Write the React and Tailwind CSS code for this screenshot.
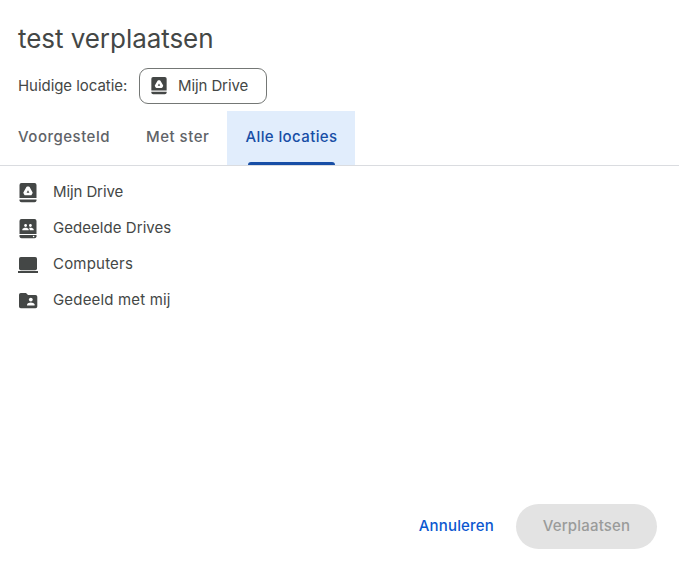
/* Drive glyph — rounded body with the triangle mark and a base strip */
function DriveIcon({ size = 20 }) {
  return (
    <svg width={size} height={size} viewBox="0 0 20 20" fill="#444746" className="shrink-0">
      <path fillRule="evenodd" d="M3.5 0h13a2 2 0 0 1 2 2v13h-17V2a2 2 0 0 1 2-2zM9.2 3.6a1 1 0 0 0-.8.5L5.500 9.300a1 1 0 0 0 0 1l.8 1.400a1 1 0 0 0 .9.500h5.600a1 1 0 0 0 .9-.5l.8-1.400a1 1 0 0 0 0-1l-2.900-5.200a1 1 0 0 0-.8-.5zM10 7.300l1.400 2.500H8.600z" />
      <path d="M1.5 16.4h17v.8a2 2 0 0 1-2 2h-13a2 2 0 0 1-2-2z" />
    </svg>
  );
}

function SharedDrivesIcon() {
  return (
    <svg width="20" height="20" viewBox="0 0 20 20" fill="#444746" className="shrink-0">
      <path d="M3.5 0h13a2 2 0 0 1 2 2v13h-17V2a2 2 0 0 1 2-2z" />
      <path d="M1.5 16h17v1.2a2 2 0 0 1-2 2h-13a2 2 0 0 1-2-2z" />
      <g fill="#fff">
        <circle cx="7.6" cy="6.5" r="1.4" />
        <circle cx="12.4" cy="6.5" r="1.4" />
        <path d="M4.3 11.3v-.9c0-1.100 2-1.700 3.200-1.700s3.200.6 3.200 1.700v.9zM11.700 11.300v-.9c0-.7-.4-1.200-.9-1.500.6-.2 1.200-.2 1.700-.2 1.300 0 3.200.6 3.200 1.700v.9z" />
        <circle cx="15.6" cy="17.5" r=".8" />
      </g>
    </svg>
  );
}

function ComputerIcon() {
  return (
    <svg width="20" height="20" viewBox="0 0 20 20" fill="#444746" className="shrink-0">
      <rect x="1" y="2" width="18" height="13.2" rx="1.8" />
      <path d="M0 16h20v2H0z" />
    </svg>
  );
}

function SharedFolderIcon() {
  return (
    <svg width="20" height="20" viewBox="0 0 20 20" fill="#444746" className="shrink-0">
      <path d="M2.8 2H8l2 2h7.500a1.800 1.800 0 0 1 1.800 1.800v9.600a1.800 1.800 0 0 1-1.800 1.800H2.800A1.800 1.800 0 0 1 1 15.400V3.800A1.800 1.800 0 0 1 2.800 2z" />
      <g fill="#fff">
        <circle cx="12.8" cy="8.6" r="1.9" />
        <path d="M9 14.5v-.9c0-1.3 2.5-2 3.800-2s3.800.7 3.800 2v.9z" />
      </g>
    </svg>
  );
}

const LOCATIONS = [
  { label: "Mijn Drive", icon: <DriveIcon />, cls: "tracking-[-0.1px]" },
  { label: "Gedeelde Drives", icon: <SharedDrivesIcon />, cls: "tracking-[0.05px]" },
  { label: "Computers", icon: <ComputerIcon />, cls: "tracking-[0.2px]" },
  { label: "Gedeeld met mij", icon: <SharedFolderIcon />, cls: "tracking-[0.17px]" },
];

export default function App() {
  return (
    <div className="flex h-[573px] w-full flex-col overflow-hidden bg-white font-['Inter','Open_Sans',sans-serif] text-[15px] text-[#444746]">
      {/* Title + current location */}
      <header className="px-[18px] pt-[21px]">
        <h1 className="h-9 whitespace-nowrap text-[26px] leading-9 tracking-[-0.05px]">test verplaatsen</h1>
        <div className="mt-[11px] flex h-9 items-center">
          <span className="w-[121px] whitespace-nowrap tracking-[-0.05px]">Huidige locatie:</span>
          <button className="flex h-9 w-32 items-center gap-[10px] whitespace-nowrap rounded-[9px] border border-[#747775] pl-[10px]">
            <DriveIcon size={18} />
            <span className="tracking-[-0.1px]">Mijn Drive</span>
          </button>
        </div>
      </header>

      {/* Tabs */}
      <nav className="mt-[7px] flex h-[55px] shrink-0 border-b border-[#dadce0] font-medium text-[#5f6368]">
        <button className="w-32 whitespace-nowrap pb-px pl-[18px] text-left tracking-[0.5px]">Voorgesteld</button>
        <button className="w-[99px] whitespace-nowrap pb-px pl-[18px] text-left tracking-[0.5px]">Met ster</button>
        <button className="flex w-32 flex-col items-center bg-[#e1edfc] text-[#174ea6]">
          <span className="flex h-[51px] items-center whitespace-nowrap pt-0.5 pl-px tracking-[0.4px]">Alle locaties</span>
          <span className="h-[3px] w-[87px] rounded-t-[3px] bg-[#174ea6]" />
        </button>
      </nav>

      <ul className="flex-1 pt-2">
        {LOCATIONS.map(({ label, icon, cls }) => (
          <li key={label} className="flex h-9 items-center gap-[15px] px-[18px]">
            <span className="pt-0.5">{icon}</span>
            <span className={cls}>{label}</span>
          </li>
        ))}
      </ul>

      <footer className="flex items-center justify-end gap-[22px] pb-6 pr-[22px] font-medium tracking-[0.18px]">
        <button className="text-[#0b57d0]">Annuleren</button>
        <button disabled className="h-[45px] w-[141px] rounded-full bg-[#e3e3e3] text-[#9a9b9a]">Verplaatsen</button>
      </footer>
    </div>
  );
}
